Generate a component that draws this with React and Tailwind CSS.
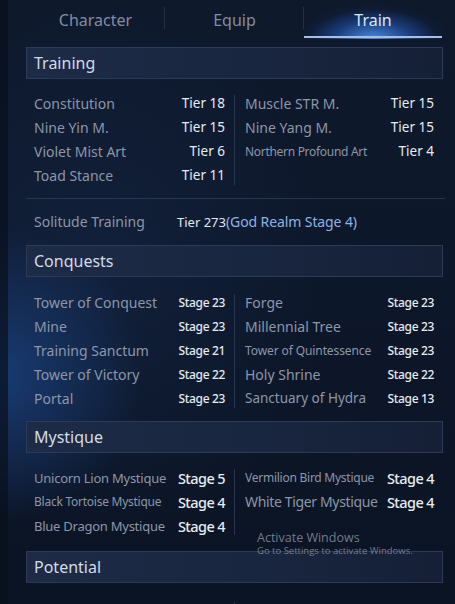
import React from "react";

function Row({ label, value, ls = "text-[14px]", vs = "text-[14px]", vc = "text-[#e6ebf2]" }) {
  return (
    <div className="flex h-[24px] items-center justify-between whitespace-nowrap">
      <span className={ls + " leading-none text-[#8c96a8]"}>{label}</span>
      <span className={vs + " leading-none " + vc}>{value}</span>
    </div>
  );
}

function Header({ title }) {
  return (
    <div className="ml-[26px] mr-[12px] flex h-[32px] items-center border border-[#2a3a57] bg-[linear-gradient(90deg,#1d2b47_0%,#19263f_55%,#152037_100%)] pl-[7px]">
      <span className="text-[16px] leading-none text-[#d3dbe7]">{title}</span>
    </div>
  );
}

function TwoCol({ left, right, divY = "my-[3px]" }) {
  return (
    <div className="flex pl-[34px]">
      <div className="w-[191px]">{left}</div>
      <div className={"ml-[9px] mr-[10px] w-px bg-[#27354e] " + divY} />
      <div className="w-[189px]">{right}</div>
    </div>
  );
}

export default function App() {
  const stage = "text-[12px] font-medium tracking-[-0.35px]";
  const mys = "text-[14.5px] font-medium tracking-[-0.6px]";
  return (
    <div
      className="relative h-[604px] w-[455px] overflow-hidden bg-[linear-gradient(180deg,#0e192c_0%,#0d172a_45%,#0b1424_100%)]"
      style={{ fontFamily: '"Noto Sans", "Open Sans", sans-serif' }}
    >
      {/* background glows */}
      <div className="pointer-events-none absolute inset-0 bg-[radial-gradient(ellipse_45%_35%_at_0%_62%,rgba(35,95,190,0.5),transparent_70%)]" />
      <div className="pointer-events-none absolute inset-0 bg-[radial-gradient(ellipse_70%_60%_at_20%_45%,rgba(30,60,110,0.25),transparent_75%)]" />
      <div className="pointer-events-none absolute left-0 top-0 h-full w-[8px] bg-[#09101d]/70" />

      <div className="relative">
        {/* Tabs */}
        <div className="ml-[26px] flex h-[39px] w-[416px]">
          <div className="relative flex w-[139px] items-center justify-center">
            <span className="text-[16px] leading-none text-[#848da0]">Character</span>
            <div className="absolute right-0 top-[7px] h-[22px] w-px bg-[#243046]" />
          </div>
          <div className="relative flex w-[139px] items-center justify-center">
            <span className="text-[16px] leading-none text-[#848da0]">Equip</span>
            <div className="absolute right-0 top-[7px] h-[22px] w-px bg-[#243046]" />
          </div>
          <div className="relative flex w-[138px] items-center justify-center">
            <div className="absolute inset-0 bg-[radial-gradient(ellipse_62%_100%_at_50%_100%,rgba(80,150,245,0.9),rgba(40,95,200,0.5)_45%,rgba(20,50,120,0.12)_75%,transparent_90%)]" />
            <div className="absolute bottom-[1px] left-0 right-0 h-[2px] bg-[#a6bfe4]" />
            <span className="relative text-[16px] leading-none text-[#dbe6f6]">Train</span>
          </div>
        </div>

        {/* Training */}
        <div className="mt-[8px]">
          <Header title="Training" />
        </div>
        <div className="pt-[13px]">
          <TwoCol
            left={
              <>
                <Row label="Constitution" value="Tier 18" vs="text-[13.5px]" />
                <Row label="Nine Yin M." value="Tier 15" vs="text-[13.5px]" />
                <Row label="Violet Mist Art" value="Tier 6" vs="text-[13.5px]" />
                <Row label="Toad Stance" value="Tier 11" vs="text-[13.5px]" />
              </>
            }
            right={
              <>
                <Row label="Muscle STR M." value="Tier 15" vs="text-[13.5px]" />
                <Row label="Nine Yang M." value="Tier 15" vs="text-[13.5px]" />
                <Row label="Northern Profound Art" value="Tier 4" ls="text-[12px] tracking-[-0.3px]" vs="text-[13.5px]" />
              </>
            }
          />
        </div>
        <div className="ml-[26px] mr-[10px] mt-[10px] h-px bg-[#27354e]" />
        <div className="mt-[11px] flex h-[24px] items-center whitespace-nowrap pl-[34px]">
          <span className="w-[143px] text-[14px] leading-none text-[#8c96a8]">Solitude Training</span>
          <span className="text-[13px] leading-none text-[#e2e8f0]">Tier 273</span>
          <span className="text-[14px] leading-none tracking-[-0.1px] text-[#8fb2e6]">(God Realm Stage 4)</span>
        </div>

        {/* Conquests */}
        <div className="mt-[11px]">
          <Header title="Conquests" />
        </div>
        <div className="pt-[14px]">
          <TwoCol
            left={
              <>
                <Row label="Tower of Conquest" value="Stage 23" vs={stage} />
                <Row label="Mine" value="Stage 23" vs={stage} />
                <Row label="Training Sanctum" value="Stage 21" vs={stage} />
                <Row label="Tower of Victory" value="Stage 22" vs={stage} />
                <Row label="Portal" value="Stage 23" vs={stage} />
              </>
            }
            right={
              <>
                <Row label="Forge" value="Stage 23" vs={stage} />
                <Row label="Millennial Tree" value="Stage 23" vs={stage} />
                <Row label="Tower of Quintessence" value="Stage 23" vs={stage} ls="text-[12px] tracking-[-0.1px]" />
                <Row label="Holy Shrine" value="Stage 22" vs={stage} />
                <Row label="Sanctuary of Hydra" value="Stage 13" vs={stage} ls="text-[13.5px]" />
              </>
            }
          />
        </div>

        {/* Mystique */}
        <div className="mt-[10px]">
          <Header title="Mystique" />
        </div>
        <div className="pt-[13px]">
          <TwoCol
            left={
              <>
                <Row label="Unicorn Lion Mystique" value="Stage 5" vs={mys} ls="text-[13px] tracking-[-0.25px]" />
                <Row label="Black Tortoise Mystique" value="Stage 4" vs={mys} ls="text-[12px] tracking-[-0.25px]" />
                <Row label="Blue Dragon Mystique" value="Stage 4" vs={mys} ls="text-[13px] tracking-[-0.25px]" />
              </>
            }
            right={
              <>
                <Row label="Vermilion Bird Mystique" value="Stage 4" vs={mys} ls="text-[12px] tracking-[-0.25px]" />
                <Row label="White Tiger Mystique" value="Stage 4" vs={mys} ls="text-[14px] tracking-[-0.35px]" />
              </>
            }
          />
        </div>

        {/* Potential */}
        <div className="mt-[13px]">
          <Header title="Potential" />
        </div>
        <div className="pt-[16px]">
          <TwoCol
            left={<Row label="Max HP" value="Lv 10" />}
            right={<Row label="DEF" value="Lv 10" />}
          />
        </div>
      </div>

      {/* Activate Windows watermark */}
      <div className="pointer-events-none absolute left-[257px] top-[530px] whitespace-nowrap text-[#9097a3]/80">
        <div className="text-[12.5px] leading-[15px]" style={{ fontFamily: '"Open Sans", "Noto Sans", sans-serif' }}>Activate Windows</div>
        <div className="text-[9.5px] leading-[12px]" style={{ fontFamily: '"Open Sans", "Noto Sans", sans-serif' }}>Go to Settings to activate Windows.</div>
      </div>
    </div>
  );
}
